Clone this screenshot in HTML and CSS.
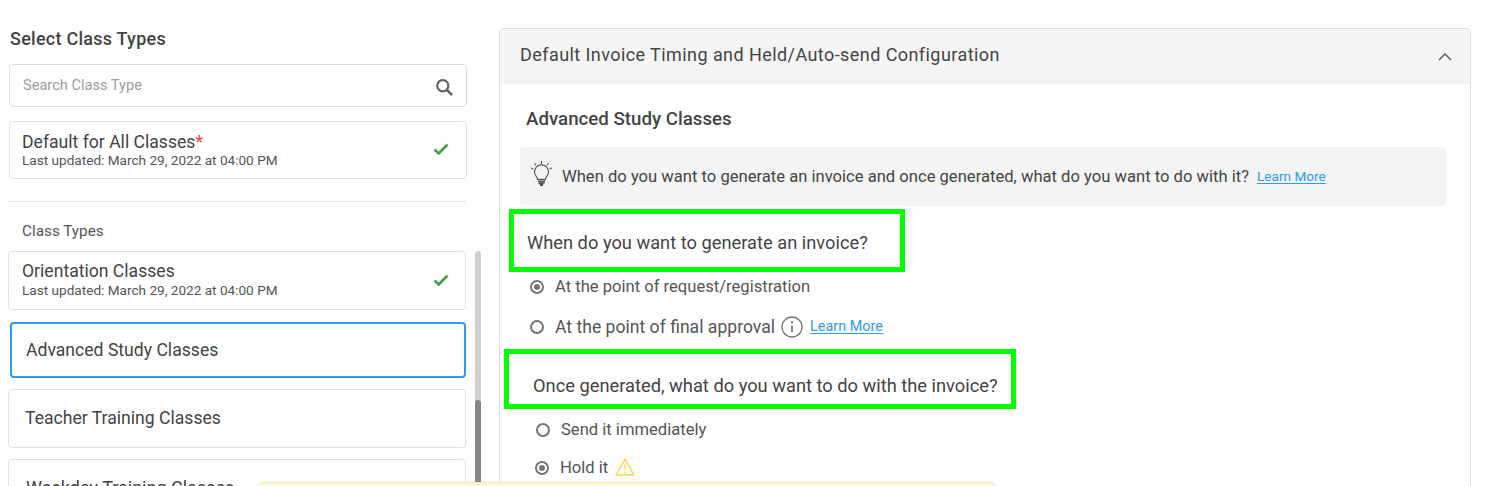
FILE: index.html
```html
<!DOCTYPE html>
<html lang="en">
<head>
<meta charset="utf-8">
<title>Default Invoice Timing</title>
<link rel="stylesheet" href="styles.css">
</head>
<body>
<div class="page">
  <aside class="side">
    <h2 class="side-title">Select Class Types</h2>
    <div class="search">
      <span class="search-text">Search Class Type</span>
      <svg class="search-icon" width="18" height="18" viewBox="0 0 18 18" fill="none"><circle cx="7.800" cy="7.800" r="5.600" stroke="#5f6368" stroke-width="2.200"/><path d="M12 12l4.400 4.400" stroke="#5f6368" stroke-width="2.600" stroke-linecap="round"/></svg>
    </div>
    <div class="card card-default">
      <div>
        <div class="card-name">Default for All Classes<span class="req">*</span></div>
        <div class="card-date">Last updated: March 29, 2022 at 04:00 PM</div>
      </div>
      <svg class="check" width="16" height="12" viewBox="0 0 16 12" fill="none"><path d="M1.500 6.500l4.200 4 8.800-9" stroke="#43a047" stroke-width="2.600"/></svg>
    </div>
    <hr class="divider">
    <div class="types-label">Class Types</div>
    <div class="list-wrap">
      <div class="list">
        <div class="card card-row">
          <div>
            <div class="card-name row-name">Orientation Classes</div>
            <div class="card-date">Last updated: March 29, 2022 at 04:00 PM</div>
          </div>
          <svg class="check" width="16" height="12" viewBox="0 0 16 12" fill="none"><path d="M1.500 6.500l4.200 4 8.800-9" stroke="#43a047" stroke-width="2.600"/></svg>
        </div>
        <div class="card card-active"><span class="card-name">Advanced Study Classes</span></div>
        <div class="card card-plain"><span class="card-name">Teacher Training Classes</span></div>
        <div class="card card-plain card-last"><span class="card-name">Weekday Training Classes</span></div>
      </div>
      <div class="scrollbar"><div class="scroll-thumb"></div></div>
    </div>
  </aside>
  <main class="panel">
    <header class="panel-head">
      <span class="panel-title">Default Invoice Timing and Held/Auto-send Configuration</span>
      <svg width="14" height="8" viewBox="0 0 14 8" fill="none"><path d="M1 7l6-6 6 6" stroke="#555" stroke-width="1.300"/></svg>
    </header>
    <h3 class="section-title">Advanced Study Classes</h3>
    <div class="tip">
      <svg class="bulb" width="24" height="28" viewBox="0 0 24 28" fill="none" stroke="#555" stroke-width="1.100">
        <path d="M7.600 19.400c-.3-2.600-3.100-4-3.100-7.500a7 7 0 0 1 14 0c0 3.500-2.800 4.900-3.100 7.500z"/>
        <path d="M8 21.300h7M8.500 23.300h6M10 25.200h3" stroke-width="1.700"/>
        <path d="M11.500 1v3M4.600 3.200l1.500 2.200M18.400 3.200l-1.500 2.200M1 8l2.400 1M22 8l-2.400 1"/>
      </svg>
      <span class="tip-text">When do you want to generate an invoice and once generated, what do you want to do with it?</span>
      <a class="link" href="#">Learn More</a>
    </div>
    <div class="mark mark-one"><span class="question">When do you want to generate an invoice?</span></div>
    <label class="option opt-a"><span class="radio on"></span>At the point of request/registration</label>
    <label class="option opt-b"><span class="radio"></span>At the point of final approval
      <svg class="info" width="22" height="22" viewBox="0 0 22 22" fill="none"><circle cx="11" cy="11" r="10" stroke="#777" stroke-width="1.300"/><path d="M11 9.500v6.500" stroke="#666" stroke-width="1.600"/><circle cx="11" cy="6.400" r="1.100" fill="#666"/></svg>
      <a class="link" href="#">Learn More</a></label>
    <div class="mark mark-two"><span class="question">Once generated, what do you want to do with the invoice?</span></div>
    <label class="option opt-c"><span class="radio"></span>Send it immediately</label>
    <label class="option opt-d"><span class="radio on"></span>Hold it
      <svg class="warn" width="20" height="18" viewBox="0 0 20 18" fill="none"><path d="M10 1.200L19 17H1z" stroke="#fdd835" stroke-width="1.400" stroke-linejoin="round"/><path d="M10 6.500v5.500" stroke="#fdd835" stroke-width="1.300"/><circle cx="10" cy="14.300" r=".8" fill="#fdd835"/></svg></label>
  </main>
  <div class="toast"></div>
</div>
</body>
</html>
```

FILE: styles.css
```css
* { box-sizing: border-box; }
html, body { margin: 0; padding: 0; background: #fff; }
body { font-family: Roboto, "Liberation Sans", sans-serif; color: #444; }
.page { position: relative; width: 1490px; height: 486px; overflow: hidden; display: flex; align-items: flex-start; }

.side { width: 499px; padding: 29px 0 0 8px; flex: none; }
.side-title { margin: 0 0 15px 2px; font-size: 18px; letter-spacing: .25px; line-height: 20px; font-weight: 500; color: #444; }
.search { width: 458px; height: 43px; margin-left: 1px; border: 1px solid #dcdcdc; border-radius: 4px; display: flex; align-items: center; justify-content: space-between; padding: 0 13px 0 13px; }
.search-text { font-size: 14.600px; color: #9e9e9e; padding-bottom: 2px; }
.search-icon { margin-top: 2px; }
.card { width: 458px; background: #fff; border: 1px solid #e0e0e0; border-radius: 4px; display: flex; align-items: center; justify-content: space-between; }
.card-default { height: 58px; margin: 14px 0 0 1px; padding: 0 17px 0 12px; }
.card-name { font-size: 17.600px; line-height: 20px; color: #444; }
.row-name { line-height: 18px; margin-bottom: 2px; }
.card-date { font-size: 13.600px; line-height: 17px; color: #555; }
.req { color: #f44336; }
.check { margin-top: -2px; }
.divider { width: 457px; margin: 22px 0 0 1px; border: 0; border-top: 1px solid #e4e4e4; }
.types-label { margin: 20px 0 0 14px; font-size: 15.300px; line-height: 18px; color: #555; }
.list-wrap { display: flex; gap: 9px; margin-top: 11px; height: 235px; overflow: hidden; }
.list { width: 458px; display: flex; flex-direction: column; }
.card-row { height: 59px; flex: none; padding: 0 16px 0 13px; }
.card-active { width: 456px; height: 56px; flex: none; margin: 12px 0 0 2px; border: 2px solid #2e9bf0; padding: 0 0 1px 14px; }
.card-plain { height: 59px; flex: none; margin-top: 11px; padding: 0 0 2px 16px; }
.card-last { margin-top: 11px; padding-left: 17px; }
.card-last .card-name { font-size: 18px; }
.scrollbar { width: 6px; height: 235px; background: #cfcfcf; border-radius: 3px 3px 0 0; padding-top: 149px; flex: none; }
.scroll-thumb { height: 86px; background: #868686; border-radius: 3px 3px 0 0; }

.panel { width: 972px; height: 470px; margin-top: 28px; flex: none; border: 1px solid #dcdcdc; border-bottom: 0; border-radius: 5px 5px 0 0; }
.panel-head { height: 55px; background: #f5f5f5; border-radius: 5px 5px 0 0; display: flex; align-items: center; justify-content: space-between; padding: 0 18px 4px 20px; }
.panel-head svg { margin-top: 4px; }
.panel-title { font-size: 18px; letter-spacing: .43px; color: #444; }
.section-title { margin: 25px 0 0 26px; font-size: 18.700px; line-height: 20px; font-weight: 500; color: #444; }
.tip { margin: 18px 0 0 20px; width: 926px; height: 59px; background: #f4f4f4; border-radius: 4px; display: flex; align-items: center; padding: 0 0 0 10px; }
.bulb { margin-right: 8px; margin-top: -5px; }
.tip-text { font-size: 16.600px; color: #444; }
.link { color: #2e9bf0; font-size: 13.600px; text-decoration: underline; text-underline-offset: 2px; text-decoration-thickness: 1px; }
.tip .link { margin: -2px 0 0 8px; }
.mark { border: 5px solid #00ff00; display: flex; align-items: center; }
.question { font-size: 18.300px; color: #444; }
.mark-one { width: 396px; height: 63px; margin: 3px 0 0 9px; padding: 4px 0 0 13px; }
.mark-two { width: 512px; height: 60px; margin: 11px 0 0 4px; padding: 13px 0 0 24px; }
.option { display: flex; align-items: center; font-size: 16.600px; line-height: 20px; color: #555; }
.radio { width: 14px; height: 14px; border: 2px solid #757575; border-radius: 50%; flex: none; margin-right: 11px; display: flex; align-items: center; justify-content: center; }
.radio.on::after { content: ""; width: 6px; height: 6px; border-radius: 50%; background: #757575; }
.opt-a { margin: 5px 0 0 30px; }
.opt-b { margin: 19px 0 0 30px; font-size: 17.600px; }
.opt-b .link { font-size: 14.400px; }
.info { margin: 0 7px 0 6px; }
.opt-c { margin: 11px 0 0 36px; }
.opt-d { margin: 18px 0 0 35px; }
.warn { margin: -2px 0 0 7px; }
.toast { position: absolute; left: 258px; top: 482px; width: 738px; height: 20px; background: #fff8c9; border: 1px solid #e8e8d8; border-radius: 4px; }
```
